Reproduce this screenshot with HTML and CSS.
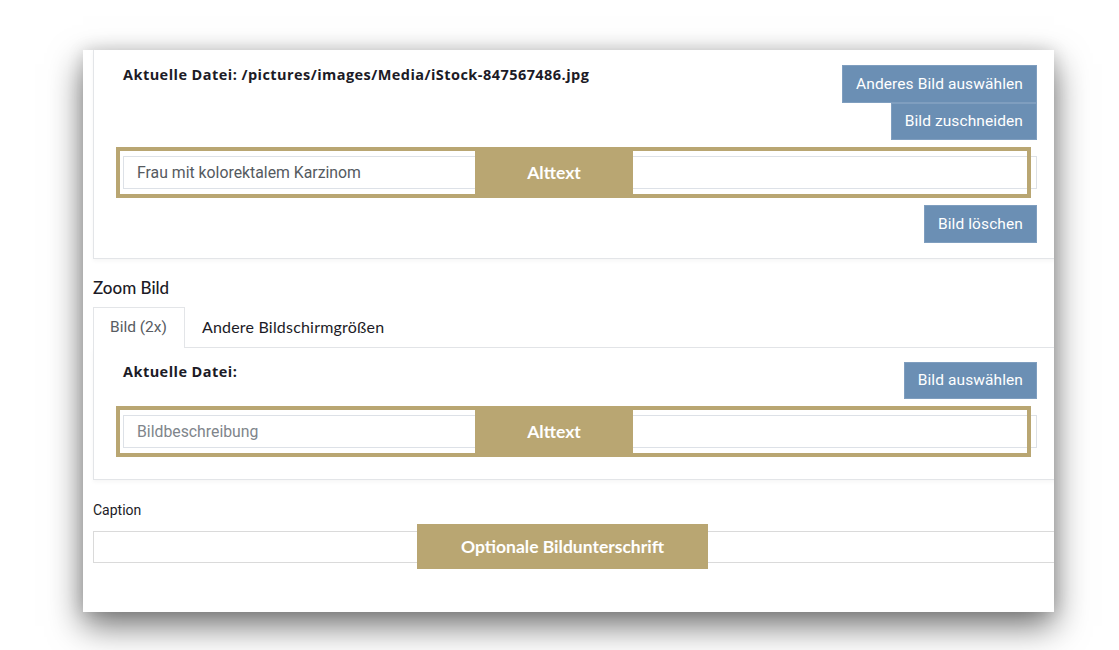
FILE: index.html
```html
<!DOCTYPE html>
<html lang="de">
<head>
<meta charset="utf-8">
<title>Bild</title>
<link rel="stylesheet" href="styles.css">
</head>
<body>
<div class="panel">
  <div class="inner">
    <section class="card card-first">
      <div class="card-head">
        <p class="file-label">Aktuelle Datei: /pictures/images/Media/iStock-847567486.jpg</p>
        <div class="btn-stack">
          <button class="btn">Anderes Bild auswählen</button>
          <button class="btn">Bild zuschneiden</button>
        </div>
      </div>
      <div class="alt-field">
        <input class="text-input" type="text" value="Frau mit kolorektalem Karzinom">
        <div class="alt-outline"></div>
        <div class="alt-tag">Alttext</div>
      </div>
      <div class="card-foot">
        <button class="btn">Bild löschen</button>
      </div>
    </section>

    <h3 class="section-title">Zoom Bild</h3>
    <div class="tabs">
      <span class="tab active">Bild (2x)</span>
      <span class="tab">Andere Bildschirmgrößen</span>
    </div>
    <section class="card card-tab">
      <div class="card-head">
        <p class="file-label">Aktuelle Datei:</p>
        <div class="btn-stack">
          <button class="btn">Bild auswählen</button>
        </div>
      </div>
      <div class="alt-field">
        <input class="text-input" type="text" placeholder="Bildbeschreibung">
        <div class="alt-outline"></div>
        <div class="alt-tag">Alttext</div>
      </div>
    </section>

    <label class="caption-label">Caption</label>
    <div class="caption-field">
      <input class="caption-input" type="text">
      <div class="caption-tag">Optionale Bildunterschrift</div>
    </div>
  </div>
</div>
</body>
</html>
```

FILE: styles.css
```css
* { box-sizing: border-box; }

html, body {
  margin: 0;
  padding: 0;
  background: #ffffff;
}

body {
  width: 1119px;
  height: 650px;
  overflow: hidden;
  padding-top: 50px;
  padding-left: 83px;
}

.panel {
  width: 971px;
  height: 562px;
  overflow: hidden;
  background: #ffffff;
  box-shadow: 0 14px 32px rgba(0, 0, 0, 0.55), 0 0 16px rgba(0, 0, 0, 0.12);
}

.inner {
  width: 974px;
  margin-left: 10px;
}

.card {
  width: 974px;
  border: 1px solid #e3e5e8;
  background: #ffffff;
  padding: 15px 29px 15px 29px;
  box-shadow: 0 2px 4px rgba(0, 0, 0, 0.04);
}

.card-first {
  margin-top: -1px;
}

.card-tab {
  border-top: none;
  padding-top: 14px;
}

.card-head {
  display: flex;
  justify-content: space-between;
  align-items: flex-start;
}

.file-label {
  margin: 0;
  font-family: "Open Sans", "Liberation Sans", sans-serif;
  font-weight: 700;
  font-size: 14.5px;
  letter-spacing: 0.45px;
  line-height: 20px;
  color: #1c1b26;
}

.btn-stack {
  display: flex;
  flex-direction: column;
  align-items: flex-end;
}

.btn {
  display: block;
  height: 37.5px;
  padding: 0 13px;
  margin: 0;
  border: 1px solid #7f9ebf;
  background: #6b8fb4;
  color: #ffffff;
  font-family: "Roboto", "Liberation Sans", sans-serif;
  font-size: 15.5px;
  line-height: 20px;
  letter-spacing: 0.1px;
  cursor: pointer;
}

.card-foot {
  display: flex;
  justify-content: flex-end;
}

.alt-field {
  position: relative;
  margin: 16px 0;
}

.text-input {
  display: block;
  width: 100%;
  height: 33px;
  border: 1px solid #dde1e7;
  padding: 0 13px;
  margin: 0;
  font-family: "Roboto", "Liberation Sans", sans-serif;
  font-size: 15.8px;
  color: #555a60;
  background: #ffffff;
  outline: none;
}

.text-input::placeholder {
  color: #80858b;
}

.alt-outline {
  position: absolute;
  left: -7px;
  top: -9px;
  width: calc(100% + 1px);
  height: 51px;
  border: 4px solid #b9a672;
  pointer-events: none;
}

.alt-tag {
  position: absolute;
  left: 352px;
  top: -9px;
  width: 158px;
  height: 51px;
  background: #b9a672;
  color: #ffffff;
  font-family: "Lato", "Liberation Sans", sans-serif;
  font-weight: 700;
  font-size: 17.5px;
  line-height: 51px;
  text-align: center;
}

.section-title {
  margin: 18px 0 8px 0;
  font-family: "Lato", "Liberation Sans", sans-serif;
  font-weight: 500;
  font-size: 17px;
  line-height: 22px;
  color: #1c1b26;
}

.tabs {
  display: flex;
  border-bottom: 1px solid #e3e5e8;
}

.tab {
  display: block;
  height: 41px;
  padding: 0 16px 3px 16px;
  line-height: 38px;
  border: 1px solid transparent;
  border-bottom: none;
  margin-bottom: -1px;
  font-family: "Lato", "Liberation Sans", sans-serif;
  font-size: 16px;
  letter-spacing: 0.2px;
  color: #1c1b26;
}

.tab.active {
  padding: 0 17px 3px 16px;
  border-color: #e3e5e8;
  background: #ffffff;
  font-family: "Roboto", "Liberation Sans", sans-serif;
  font-size: 15.5px;
  letter-spacing: 0;
  color: #585c62;
}

.caption-label {
  display: block;
  margin: 20px 0 11px 0;
  font-family: "Roboto", "Liberation Sans", sans-serif;
  font-size: 14px;
  line-height: 20px;
  color: #1c1b26;
}

.caption-field {
  position: relative;
}

.caption-input {
  display: block;
  width: 974px;
  height: 32px;
  border: 1px solid #dadada;
  margin: 0;
  padding: 0 12px;
  background: #ffffff;
  outline: none;
}

.caption-tag {
  position: absolute;
  left: 324px;
  top: -7px;
  width: 291px;
  height: 45px;
  background: #b9a672;
  color: #ffffff;
  font-family: "Lato", "Liberation Sans", sans-serif;
  font-weight: 700;
  font-size: 17.5px;
  line-height: 45px;
  text-align: center;
}
```
